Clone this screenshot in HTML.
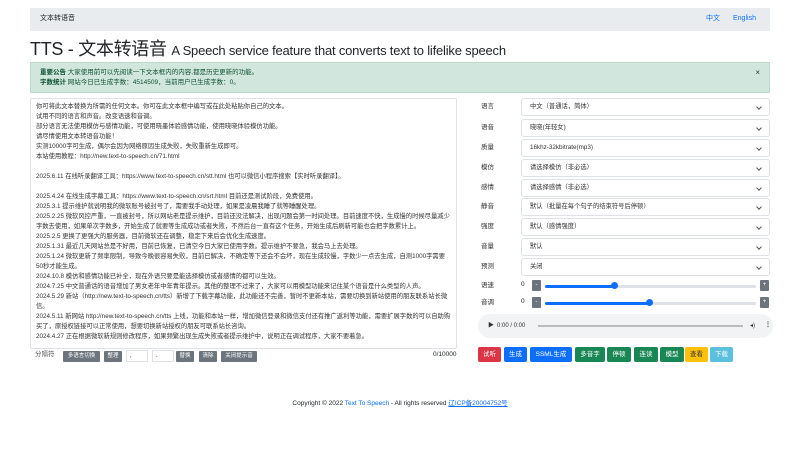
<!DOCTYPE html>
<html><head><meta charset="utf-8"><style>
*{box-sizing:border-box;margin:0;padding:0}
body{width:800px;height:450px;background:#fff;font-family:"Liberation Sans","Noto Sans CJK SC",sans-serif;color:#212529;position:relative;overflow:hidden;line-height:1}
.a{position:absolute}
.nav{left:30px;top:8px;width:740px;height:23px;background:#e9ecef;font-size:7px}
h1{left:30px;top:40px;font-weight:400;font-size:18px;white-space:nowrap;letter-spacing:-0.3px;line-height:1}
h1 small{font-size:13px;letter-spacing:-0.2px}
.alert{left:30px;top:62px;width:740px;height:31px;background:#d1e7dd;border:1px solid #badbcc;font-size:6.5px;color:#0f5132;padding:5px 9px;line-height:10px}
.ta{left:30px;top:98px;width:427px;height:251px;border:1px solid #dee2e6;border-radius:2px;font-size:6.3px;line-height:10px;padding:3px 5px;color:#333;overflow:hidden}
.lab{left:481px;font-size:6.5px;color:#333;line-height:8px}
.sel{left:521px;width:249px;height:18px;border:1px solid #dee2e6;border-radius:3px;font-size:6.3px;padding:0 8px;line-height:16px;color:#333}
.sel:after{content:"";position:absolute;right:8px;top:6px;width:3px;height:3px;border-right:1px solid #555;border-bottom:1px solid #555;transform:rotate(45deg)}
.btn{top:347px;height:15px;font-size:6.5px;color:#fff;border-radius:2px;text-align:center;line-height:15px}
.sb{height:11px;width:9px;background:#6c757d;border-radius:1px;color:#fff;font-size:6px;text-align:center;line-height:11px}
.tr{height:3px;background:#dee2e6;border-radius:2px}
.gb{top:351px;height:11px;background:#6c757d;color:#fff;font-size:5.5px;line-height:11px;text-align:center;border-radius:1px}
</style></head><body>
<div class="a nav"><span class="a" style="left:10px;top:7px;line-height:8px">文本转语音</span><span class="a" style="left:676px;top:7px;line-height:8px;color:#0d6efd">中文</span><span class="a" style="left:703px;top:7px;line-height:8px;color:#0d6efd">English</span></div>
<h1 class="a">TTS - 文本转语音 <small>A Speech service feature that converts text to lifelike speech</small></h1>
<div class="a alert"><b>重要公告</b> 大家使用前可以先阅读一下文本框内的内容,都是历史更新的功能。<br><b>字数统计</b> 网站今日已生成字数：4514509，当前用户已生成字数：0。<span class="a" style="right:9px;top:5px;font-size:8px;color:#333">×</span></div>
<div class="a ta">你可将此文本替换为所需的任何文本。你可在此文本框中编写或在此处粘贴你自己的文本。<br>试用不同的语言和声音。改变语速和音调。<br>部分语言无法使用模仿与感情功能，可使用晓墨体验感情功能，使用晓晓体验模仿功能。<br>请尽情使用文本转语音功能！<br>实测10000字可生成，偶尔会因为网络原因生成失败，失败重新生成即可。<br>本站使用教程：http://new.text-to-speech.cn/71.html<br><br>2025.6.11 在线听录翻译工具：https://www.text-to-speech.cn/stt.html 也可以微信小程序搜索【实时听录翻译】。<br><br>2025.4.24 在线生成字幕工具：https://www.text-to-speech.cn/srt.html 目前还是测试阶段，免费使用。<br>2025.3.1 提示维护就说明我的微软账号被封号了，需要我手动处理，如果是凌晨我睡了就等睡醒处理。<br>2025.2.25 微软风控严重，一直被封号，所以网站老是提示维护，目前还没法解决，出现问题会第一时间处理。目前速度不快，生成慢的时候尽量减少字数去使用，如果单次字数多，开始生成了就要等生成成功或者失败，不然后台一直有这个任务，开始生成后刷新可能也会把字数累计上。<br>2025.2.5 更换了更强大的服务器，目前微软还在调整，稳定下来后会优化生成速度。<br>2025.1.31 最近几天网站总是不好用，目前已恢复，已清空今日大家已使用字数。提示维护不要急，我会马上去处理。<br>2025.1.24 微软更新了频率限制，导致今晚很容易失败，目前已解决，不确定等下还会不会坏，现在生成较慢，字数少一点去生成，自测1000字需要50秒才能生成。<br>2024.10.8 模仿和感情功能已补全，现在外语只要是能选择模仿或者感情的都可以生效。<br>2024.7.25 中文普通话的语音增加了男女老年中年青年提示。其他的整理不过来了，大家可以用模型功能来记住某个语音是什么类型的人声。<br>2024.5.29 新站（http://new.text-to-speech.cn/tts）新增了下载字幕功能，此功能还不完善，暂时不更新本站，需要切换到新站使用的朋友联系站长微信。<br>2024.5.11 新网站 http://new.text-to-speech.cn/tts 上线，功能和本站一样，增加微信登录和微信支付还有推广返利等功能，需要扩展字数的可以自助购买了，原授权链接可以正常使用，想要切换新站授权的朋友可联系站长咨询。<br>2024.4.27 正在根据微软新规则修改程序，如果频繁出现生成失败或者提示维护中，说明正在调试程序，大家不要着急。</div>
<span class="a" style="left:35px;top:352px;font-size:6.5px;color:#555">分隔符</span>
<div class="a gb" style="left:63px;width:37px">多语言切换</div>
<div class="a gb" style="left:104px;width:18px">整理</div>
<div class="a" style="left:126px;top:350px;width:22px;height:12px;border:1px solid #dee2e6;font-size:6px;padding-left:3px;line-height:10px">,</div>
<div class="a" style="left:152px;top:350px;width:22px;height:12px;border:1px solid #dee2e6;font-size:6px;padding-left:3px;line-height:10px">.</div>
<div class="a gb" style="left:176px;width:18px">替换</div>
<div class="a gb" style="left:199px;width:18px">清除</div>
<div class="a gb" style="left:221px;width:36px">关闭提示音</div>
<span class="a" style="left:433px;top:352px;font-size:6.5px">0/10000</span>
<div class="a lab" style="top:103px">语言</div><div class="a sel" style="top:98px">中文（普通话，简体）</div>
<div class="a lab" style="top:124px">语音</div><div class="a sel" style="top:119px">晓晓(年轻女)</div>
<div class="a lab" style="top:144px">质量</div><div class="a sel" style="top:139px">16khz-32kbitrate(mp3)</div>
<div class="a lab" style="top:164px">模仿</div><div class="a sel" style="top:159px">请选择模仿（非必选）</div>
<div class="a lab" style="top:184px">感情</div><div class="a sel" style="top:179px">请选择感情（非必选）</div>
<div class="a lab" style="top:203px">静音</div><div class="a sel" style="top:198px">默认（批量在每个句子的结束符号后停顿）</div>
<div class="a lab" style="top:223px">强度</div><div class="a sel" style="top:218px">默认（感情强度）</div>
<div class="a lab" style="top:243px">音量</div><div class="a sel" style="top:238px">默认</div>
<div class="a lab" style="top:263px">预测</div><div class="a sel" style="top:258px">关闭</div>
<div class="a lab" style="top:282px">语速</div><span class="a" style="left:521px;top:282px;font-size:6.5px">0</span>
<div class="a sb" style="left:532px;top:280px">-</div><div class="a tr" style="left:545px;top:285px;width:211px"></div><div class="a tr" style="left:545px;top:285px;width:71px;background:#0d6efd"></div><div class="a" style="left:611px;top:282px;width:7px;height:7px;border-radius:50%;background:#0d6efd"></div><div class="a sb" style="left:760px;top:280px">+</div>
<div class="a lab" style="top:299px">音调</div><span class="a" style="left:521px;top:299px;font-size:6.5px">0</span>
<div class="a sb" style="left:532px;top:297px">-</div><div class="a tr" style="left:545px;top:302px;width:211px"></div><div class="a tr" style="left:545px;top:302px;width:106px;background:#0d6efd"></div><div class="a" style="left:646px;top:299px;width:7px;height:7px;border-radius:50%;background:#0d6efd"></div><div class="a sb" style="left:760px;top:297px">+</div>
<div class="a" style="left:478px;top:314px;width:295px;height:24px;border-radius:12px;background:#f1f3f4;font-size:6px;color:#333"><span class="a" style="left:10px;top:9px">▶</span><span class="a" style="left:19px;top:9px">0:00 / 0:00</span><div class="a" style="left:60px;top:11px;width:205px;height:2px;background:#bbb"></div><span class="a" style="left:272px;top:9px">◂)</span><span class="a" style="left:287px;top:8px;font-weight:bold">⋮</span></div>
<div class="a btn" style="left:478px;width:23px;background:#dc3545">试听</div>
<div class="a btn" style="left:504px;width:23px;background:#0d6efd">生成</div>
<div class="a btn" style="left:530px;width:42px;background:#0d6efd">SSML生成</div>
<div class="a btn" style="left:575px;width:30px;background:#198754">多音字</div>
<div class="a btn" style="left:607px;width:24px;background:#198754">停顿</div>
<div class="a btn" style="left:634px;width:24px;background:#198754">连读</div>
<div class="a btn" style="left:660px;width:24px;background:#198754">模型</div>
<div class="a btn" style="left:685px;width:23px;background:#ffc107;color:#333">查看</div>
<div class="a btn" style="left:710px;width:23px;background:#5bc0de">下载</div>
<div class="a" style="left:0;top:401px;width:800px;text-align:center;font-size:6.5px">Copyright © 2022 <span style="color:#0d6efd">Text To Speech</span> - All rights reserved <span style="color:#0d6efd;text-decoration:underline">辽ICP备20004752号</span></div>
</body></html>
